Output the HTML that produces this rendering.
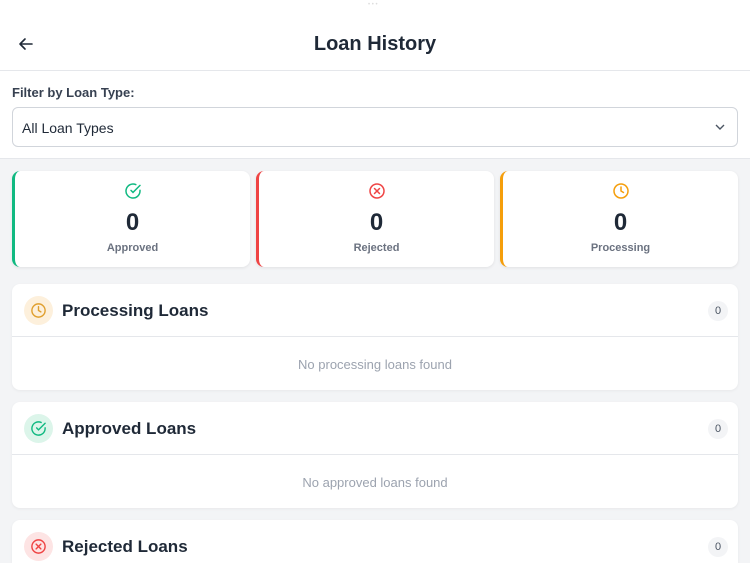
<!DOCTYPE html><html><head><style>
*{box-sizing:border-box;margin:0;padding:0}
html,body{width:750px;height:563px;overflow:hidden}
body{background:#f3f4f6;font-family:"Liberation Sans",sans-serif;color:#1f2937;position:relative}
.hdr{position:absolute;left:0;top:0;width:750px;height:71px;background:#fff;border-bottom:1px solid #e5e7eb}
.hdr h1{position:absolute;left:0;right:0;top:33px;text-align:center;font-size:20px;font-weight:600;color:#1f2937}
.dots{position:absolute;left:368px;top:2px;width:14px;height:3px;color:#ddd;font-size:6px}
.flt{position:absolute;left:0;top:71px;width:750px;height:88px;background:#fff;border-bottom:1px solid #e5e7eb}
.flt .l{position:absolute;left:12px;top:14px;font-size:13px;font-weight:600;color:#374151}
.sel{position:absolute;left:12px;top:36px;width:726px;height:40px;border:1px solid #d1d5db;border-radius:6px;font-size:14px;padding:12px 9px;color:#1f2937}
.card{position:absolute;top:171px;width:238px;height:96px;background:#fff;border-radius:8px;border-left:3px solid;box-shadow:0 1px 3px rgba(0,0,0,.08);text-align:center}
.card svg{position:absolute;left:50%;margin-left:-9px;top:11px}
.card .n{position:absolute;left:0;right:0;top:38px;font-size:24px;font-weight:700;color:#1f2937}
.card .t{position:absolute;left:0;right:0;top:71px;font-size:11px;font-weight:700;color:#6b7280}
.sec{position:absolute;left:12px;width:726px;height:106px;background:#fff;border-radius:8px;box-shadow:0 1px 3px rgba(0,0,0,.05);overflow:hidden}
.sec .hd{height:53px;border-bottom:1px solid #e5e7eb;position:relative}
.sec .ic{position:absolute;left:12px;top:12px;width:29px;height:29px;border-radius:50%}
.sec .ic svg{position:absolute;left:6px;top:6px}
.sec .tt{position:absolute;left:50px;top:17px;font-size:17px;font-weight:600;color:#1f2937}
.sec .bd{position:absolute;right:10px;top:17px;width:20px;height:20px;border-radius:50%;background:#f3f4f6;font-size:11px;text-align:center;line-height:20px;color:#4b5563}
.sec .em{text-align:center;font-size:13px;color:#9ca3af;padding-top:20px}
</style></head><body>
<div class="hdr"><div class="dots">• • •</div>
<svg style="position:absolute;left:18px;top:36px" width="16" height="16" viewBox="0 0 16 16" fill="none" stroke="#1f2937" stroke-width="1.6" stroke-linecap="round" stroke-linejoin="round"><path d="M14 8H2M7 3L2 8l5 5"/></svg>
<h1>Loan History</h1></div>
<div class="flt"><div class="l">Filter by Loan Type:</div><div class="sel">All Loan Types
<svg style="position:absolute;right:12px;top:15px" width="10" height="8" viewBox="0 0 10 8" fill="none" stroke="#4b5563" stroke-width="1.4"><path d="M1 2l4 4 4-4"/></svg></div></div>

<div class="card" style="left:12px;border-color:#10b981"><svg width="18" height="18" viewBox="0 0 18 18" fill="none" stroke="#10b981" stroke-width="1.5" stroke-linecap="round"><path d="M16 8.3V9a7 7 0 1 1-4.2-6.4"/><path d="M16 3.4L9 10.4 7 8.4"/></svg><div class="n">0</div><div class="t">Approved</div></div>
<div class="card" style="left:256px;border-color:#ef4444"><svg width="18" height="18" viewBox="0 0 18 18" fill="none" stroke="#ef4444" stroke-width="1.5" stroke-linecap="round"><circle cx="9" cy="9" r="7"/><path d="M6.5 6.5l5 5M11.5 6.5l-5 5"/></svg><div class="n">0</div><div class="t">Rejected</div></div>
<div class="card" style="left:500px;border-color:#f59e0b"><svg width="18" height="18" viewBox="0 0 18 18" fill="none" stroke="#f59e0b" stroke-width="1.5" stroke-linecap="round"><circle cx="9" cy="9" r="7"/><path d="M9 5v4l2.5 1.5"/></svg><div class="n">0</div><div class="t">Processing</div></div>

<div class="sec" style="top:284px"><div class="hd"><div class="ic" style="background:#fdf0dc"><svg width="17" height="17" viewBox="0 0 18 18" fill="none" stroke="#e0a030" stroke-width="1.5" stroke-linecap="round"><circle cx="9" cy="9" r="7"/><path d="M9 5v4l2.5 1.5"/></svg></div><div class="tt">Processing Loans</div><div class="bd">0</div></div><div class="em">No processing loans found</div></div>
<div class="sec" style="top:402px"><div class="hd"><div class="ic" style="background:#dcf5ea"><svg width="17" height="17" viewBox="0 0 18 18" fill="none" stroke="#10b981" stroke-width="1.5" stroke-linecap="round"><path d="M16 8.3V9a7 7 0 1 1-4.2-6.4"/><path d="M16 3.4L9 10.4 7 8.4"/></svg></div><div class="tt">Approved Loans</div><div class="bd">0</div></div><div class="em">No approved loans found</div></div>
<div class="sec" style="top:520px;height:43px;border-radius:8px 8px 0 0"><div class="hd" style="border-bottom:none"><div class="ic" style="background:#fde4e4"><svg width="17" height="17" viewBox="0 0 18 18" fill="none" stroke="#ef4444" stroke-width="1.5" stroke-linecap="round"><circle cx="9" cy="9" r="7"/><path d="M6.5 6.5l5 5M11.5 6.5l-5 5"/></svg></div><div class="tt">Rejected Loans</div><div class="bd">0</div></div></div>
</body></html>
